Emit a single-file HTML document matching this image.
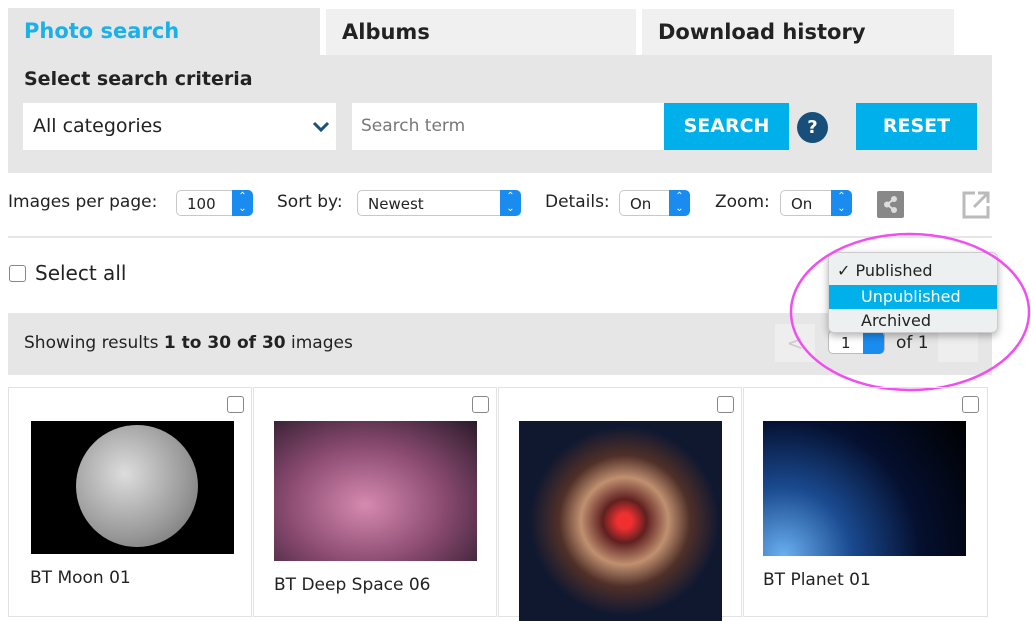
<!DOCTYPE html>
<html><head><style>
body{margin:0;width:1031px;height:608px;overflow:hidden;background:#fff;font-family:"DejaVu Sans","Liberation Sans",sans-serif;color:#222;position:relative}
.a{position:absolute}
.tab{position:absolute;top:9px;height:46px;font-size:21px;font-weight:bold;line-height:46px;padding-left:16px;box-sizing:border-box}
.sel{position:absolute;top:190px;height:26px;border:1px solid #c8c8c8;border-radius:5px;background:#fff;font-size:15px;line-height:26px;padding-left:10px;box-sizing:border-box}
.sel i{position:absolute;right:-1px;top:-1px;width:21px;height:26px;background:#1a8cf0;border-radius:0 5px 5px 0;color:#fff;font-style:normal;font-size:10px;text-align:center;line-height:12px;padding-top:1px;box-sizing:border-box}
.lbl{position:absolute;top:192px;font-size:17px}
.cell{position:absolute;top:387px;width:244px;height:230px;border:1px solid #e2e2e2;box-sizing:border-box}
.cb{position:absolute;width:15px;height:15px;border:1px solid #888;border-radius:3px;background:#fff}
.cap{position:absolute;font-size:17px}
</style></head><body>
<div class="tab" style="left:8px;width:312px;top:8px;height:48px;background:#e6e6e6;color:#1cb0e8">Photo search</div>
<div class="tab" style="left:326px;width:310px;background:#f0f0f0">Albums</div>
<div class="tab" style="left:642px;width:312px;background:#f0f0f0">Download history</div>
<div class="a" style="left:8px;top:55px;width:984px;height:118px;background:#e6e6e6"></div>
<div class="a" style="left:24px;top:68px;font-size:19px;font-weight:bold">Select search criteria</div>
<div class="a" style="left:23px;top:103px;width:313px;height:47px;background:#fff;font-size:19px;line-height:47px;box-sizing:border-box;padding-left:10px">All categories
<svg class="a" style="right:6px;top:18px" width="18" height="12"><path d="M2 2l7 7 7-7" stroke="#1b4f7c" stroke-width="3" fill="none"/></svg></div>
<div class="a" style="left:352px;top:103px;width:312px;height:47px;background:#fff;font-size:17px;line-height:47px;padding-left:9px;box-sizing:border-box;color:#777">Search term</div>
<div class="a" style="left:664px;top:103px;width:125px;height:47px;background:#00b0ea;color:#fff;font-weight:bold;font-size:19px;line-height:47px;text-align:center">SEARCH</div>
<div class="a" style="left:797px;top:112px;width:31px;height:31px;border-radius:50%;background:#174e7a;color:#fff;font-weight:bold;font-size:18px;line-height:31px;text-align:center">?</div>
<div class="a" style="left:856px;top:103px;width:121px;height:47px;background:#00b0ea;color:#fff;font-weight:bold;font-size:19px;line-height:47px;text-align:center">RESET</div>

<div class="lbl" style="left:8px">Images per page:</div>
<div class="sel" style="left:176px;width:77px">100<i>⌃<br>⌄</i></div>
<div class="lbl" style="left:277px">Sort by:</div>
<div class="sel" style="left:357px;width:164px">Newest<i>⌃<br>⌄</i></div>
<div class="lbl" style="left:545px">Details:</div>
<div class="sel" style="left:619px;width:71px">On<i>⌃<br>⌄</i></div>
<div class="lbl" style="left:715px">Zoom:</div>
<div class="sel" style="left:780px;width:72px">On<i>⌃<br>⌄</i></div>
<div class="a" style="left:877px;top:191px;width:27px;height:27px;background:#888;border-radius:2px"><svg width="27" height="27"><path d="M17 8L10 13.5 17 19" stroke="#ddd" stroke-width="2" fill="none"/><circle cx="17" cy="8" r="3" fill="#ddd"/><circle cx="10" cy="13.5" r="3" fill="#ddd"/><circle cx="17" cy="19" r="3" fill="#ddd"/></svg></div>
<svg class="a" style="left:961px;top:190px" width="30" height="30"><path d="M14 3H3v24h24V16" stroke="#bbb" stroke-width="3" fill="none"/><path d="M13 17L26 4M17 3h10v10" stroke="#bbb" stroke-width="3" fill="none"/></svg>
<div class="a" style="left:8px;top:236px;width:984px;height:2px;background:#e6e6e6"></div>
<div class="cb" style="left:9px;top:265px"></div>
<div class="a" style="left:35px;top:261px;font-size:20px">Select all</div>
<div class="a" style="left:8px;top:313px;width:984px;height:62px;background:#e6e6e6"></div>
<div class="a" style="left:24px;top:333px;font-size:17px">Showing results <b>1 to 30 of 30</b> images</div>
<div class="a" style="left:775px;top:324px;width:40px;height:38px;background:#eee;color:#ccc;font-size:20px;line-height:38px;text-align:center">&lt;</div>
<div class="a" style="left:828px;top:330px;width:57px;height:24px;border:1px solid #bbb;border-radius:5px;background:#fff;font-size:15px;padding-left:12px;box-sizing:border-box;line-height:24px">1<span style="position:absolute;right:0;top:0;width:21px;height:23px;background:#1a8cf0;border-radius:0 5px 5px 0"></span></div>
<div class="a" style="left:896px;top:333px;font-size:17px">of 1</div>
<div class="a" style="left:938px;top:324px;width:40px;height:38px;background:#eee"></div>

<div class="a" style="left:828px;top:252px;width:170px;height:81px;background:#edf0f0;border:1px solid #ccc;border-radius:6px;box-shadow:0 3px 8px rgba(0,0,0,.3);font-size:16px;box-sizing:border-box">
<div style="position:absolute;left:8px;top:8px">✓ Published</div>
<div style="position:absolute;left:0;top:32px;width:168px;height:24px;background:#00b0ea;color:#fff;line-height:24px;padding-left:32px;box-sizing:border-box">Unpublished</div>
<div style="position:absolute;left:32px;top:58px">Archived</div></div>
<svg class="a" style="left:785px;top:228px" width="250" height="168"><ellipse cx="125" cy="84" rx="119" ry="78" stroke="#f04ef0" stroke-width="2.5" fill="none"/></svg>

<div class="cell" style="left:8px"><div class="cb" style="left:218px;top:8px"></div>
<div class="a" style="left:22px;top:33px;width:203px;height:133px;background:#000"><div class="a" style="left:45px;top:4px;width:122px;height:122px;border-radius:50%;background:radial-gradient(circle at 40% 40%,#ddd,#999 60%,#666)"></div></div>
<div class="cap" style="left:21px;top:180px">BT Moon 01</div></div>
<div class="cell" style="left:253px"><div class="cb" style="left:218px;top:8px"></div>
<div class="a" style="left:20px;top:33px;width:203px;height:140px;background:radial-gradient(ellipse at 45% 60%,#d68ab0,#8a4a70 50%,#2a1a2a)"></div>
<div class="cap" style="left:20px;top:187px">BT Deep Space 06</div></div>
<div class="cell" style="left:498px"><div class="cb" style="left:218px;top:8px"></div>
<div class="a" style="left:20px;top:33px;width:203px;height:200px;background:radial-gradient(circle at 52% 50%,#f03030 5%,#602020 15%,#c09070 30%,#503028 45%,#101830 65%)"></div></div>
<div class="cell" style="left:743px;width:245px"><div class="cb" style="left:218px;top:8px"></div>
<div class="a" style="left:19px;top:33px;width:203px;height:135px;background:radial-gradient(circle at 10% 100%,#6ab0f0,#1a4a90 30%,#051030 60%,#000)"></div>
<div class="cap" style="left:19px;top:182px">BT Planet 01</div></div>
</body></html>
